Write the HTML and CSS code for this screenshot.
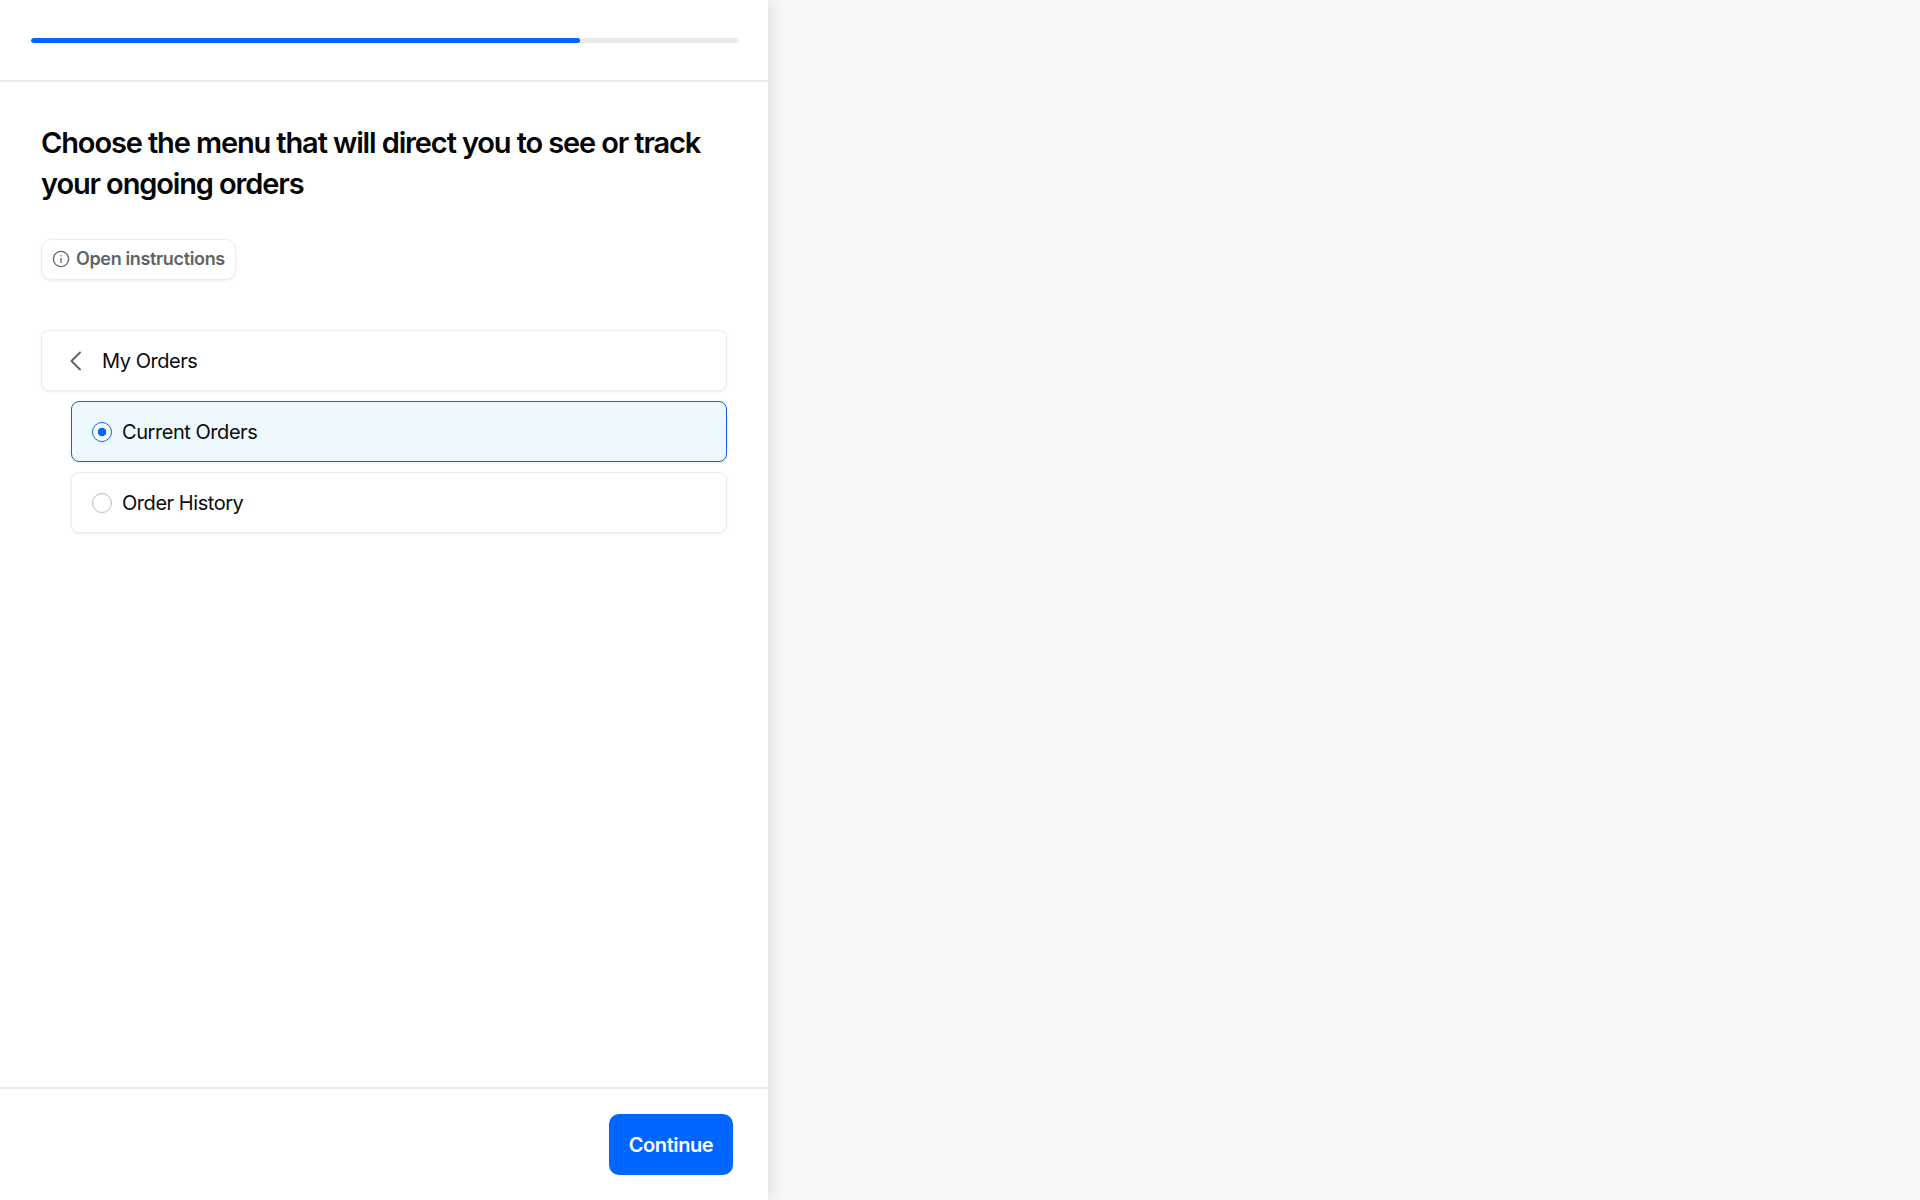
FILE: index.html
```html
<!DOCTYPE html>
<html lang="en">
<head>
    <meta charset="UTF-8">
    <meta name="viewport" content="width=device-width, initial-scale=1.0">
    <title>Task</title>
    <link rel="stylesheet" href="styles.css">
</head>
<body>
    <div class="panel">
        <div class="progress-header">
            <div class="progress-track"><div class="progress-fill"></div></div>
        </div>

        <div class="content">
            <h1>Choose the menu that will direct you to see or track your ongoing orders</h1>

            <button class="instructions">
                <svg width="18" height="18" viewBox="0 0 18 18" fill="none" stroke="#5f6368" stroke-width="1.3" stroke-linecap="round">
                    <circle cx="9" cy="9" r="7.6"></circle>
                    <path d="M9 8.4v4"></path>
                    <path d="M9 5.7v.1"></path>
                </svg>
                Open instructions
            </button>

            <div class="menu">
                <div class="card back-row">
                    <svg width="20" height="20" viewBox="0 0 20 20" fill="none" stroke="#5f6368" stroke-width="2" stroke-linecap="round" stroke-linejoin="round">
                        <path d="M14 1.5 5.5 10l8.500 8.500"></path>
                    </svg>
                    My Orders
                </div>
                <div class="card option selected">
                    <span class="radio"></span>
                    Current Orders
                </div>
                <div class="card option">
                    <span class="radio"></span>
                    Order History
                </div>
            </div>
        </div>

        <div class="footer">
            <button class="continue">Continue</button>
        </div>
    </div>
</body>
</html>
```
FILE: styles.css
```css
* { box-sizing: border-box; }
html, body { height: 100%; }
body { margin: 0; background: #f8f8fa; font-family: Inter, "Liberation Sans", sans-serif; color: #0b0b0c; }

.panel { width: 768px; height: 1200px; background: #fff; display: flex; flex-direction: column; box-shadow: 2px 0 16px rgba(20, 20, 40, 0.13); }

.progress-header { height: 82px; padding: 38px 30px 0 31px; border-bottom: 2px solid #ececee; flex-shrink: 0; }
.progress-track { height: 5px; background: #e9e9eb; border-radius: 3px; overflow: hidden; }
.progress-fill { width: 549px; height: 100%; background: #0066ff; border-radius: 3px; }

.content { flex: 1; padding: 40px 41px 0 41px; }
h1 { margin: 0; font-size: 29px; line-height: 41px; font-weight: 600; letter-spacing: -1.13px; color: #050506; }

.instructions { display: flex; align-items: center; gap: 6px; height: 41px; margin-top: 35px; padding: 0 10px 2px 10px; background: #fff; border: 1px solid #ececee; border-radius: 10px; box-shadow: 0 1px 3px rgba(0, 0, 0, 0.07); color: #5f6368; font-family: inherit; font-size: 18px; font-weight: 600; letter-spacing: -0.35px; }

.menu { display: flex; flex-direction: column; gap: 10px; margin-top: 50px; }
.card { display: flex; align-items: center; height: 61px; background: #fff; border: 1px solid #ececee; border-radius: 8px; box-shadow: 0 1px 3px rgba(0, 0, 0, 0.07); font-size: 20px; letter-spacing: -0.45px; }
.back-row { padding-left: 24px; gap: 16px; }
.option { margin-left: 30px; padding-left: 20px; gap: 10px; }
.option.selected { background: #edf9fc; border: 1.5px solid #0b66e4; }

.radio { width: 20px; height: 20px; border: 1.5px solid #bdbdbf; border-radius: 50%; background: #fff; flex-shrink: 0; }
.selected .radio { border-color: #0066ff; background: radial-gradient(circle, #0066ff 0 4px, #fff 4.6px); }

.footer { height: 113px; border-top: 2px solid #ececee; padding: 25px 35px 0 0; display: flex; justify-content: flex-end; flex-shrink: 0; }
.continue { width: 124px; height: 61px; border: none; border-radius: 10px; background: #0066ff; color: #fff; font-family: inherit; font-size: 20px; font-weight: 600; letter-spacing: -0.4px; }
```
